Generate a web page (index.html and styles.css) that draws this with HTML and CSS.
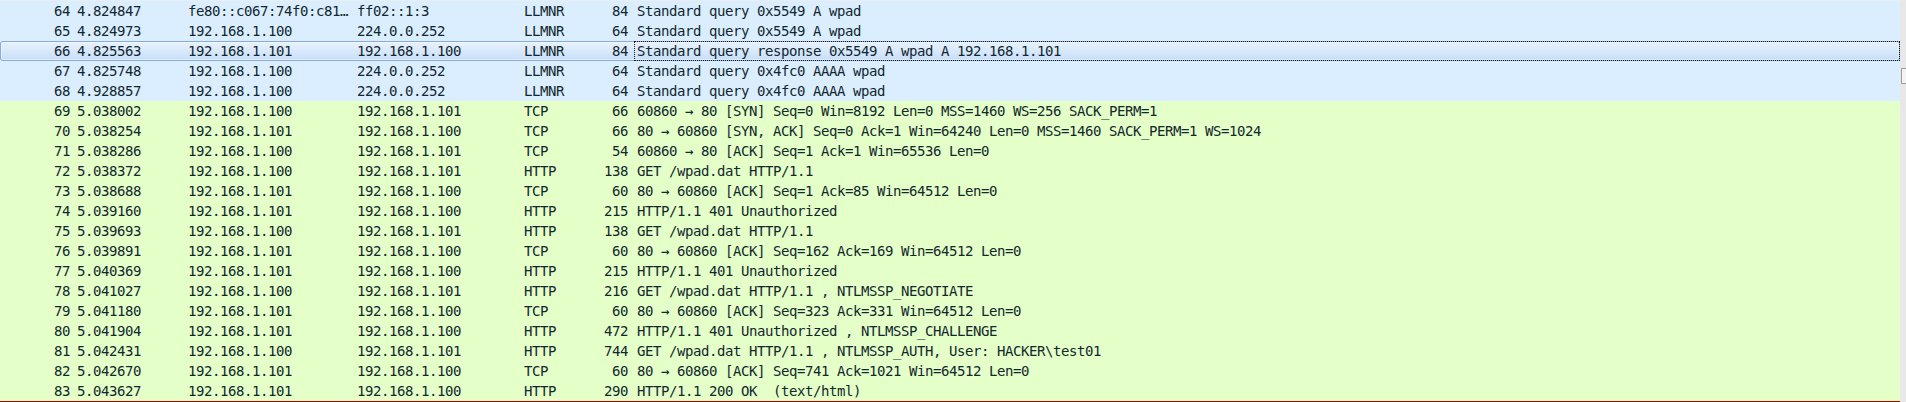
FILE: index.html
```html
<!DOCTYPE html>
<html>
<head>
<meta charset="utf-8">
<link rel="stylesheet" href="styles.css">
</head>
<body>
<div class="view">
  <div class="list">
    <div class="row udp"><span class="c no">64</span><span class="c">4.824847</span><span class="c">fe80::c067:74f0:c81…</span><span class="c">ff02::1:3</span><span class="c">LLMNR</span><span class="c len">84</span><span class="c info">Standard query 0x5549 A wpad</span></div>
    <div class="row udp"><span class="c no">65</span><span class="c">4.824973</span><span class="c">192.168.1.100</span><span class="c">224.0.0.252</span><span class="c">LLMNR</span><span class="c len">64</span><span class="c info">Standard query 0x5549 A wpad</span></div>
    <div class="row udp sel"><span class="c no">66</span><span class="c">4.825563</span><span class="c">192.168.1.101</span><span class="c">192.168.1.100</span><span class="c">LLMNR</span><span class="c len">84</span><span class="c info focus">Standard query response 0x5549 A wpad A 192.168.1.101</span></div>
    <div class="row udp"><span class="c no">67</span><span class="c">4.825748</span><span class="c">192.168.1.100</span><span class="c">224.0.0.252</span><span class="c">LLMNR</span><span class="c len">64</span><span class="c info">Standard query 0x4fc0 AAAA wpad</span></div>
    <div class="row udp"><span class="c no">68</span><span class="c">4.928857</span><span class="c">192.168.1.100</span><span class="c">224.0.0.252</span><span class="c">LLMNR</span><span class="c len">64</span><span class="c info">Standard query 0x4fc0 AAAA wpad</span></div>
    <div class="row http"><span class="c no">69</span><span class="c">5.038002</span><span class="c">192.168.1.100</span><span class="c">192.168.1.101</span><span class="c">TCP</span><span class="c len">66</span><span class="c info">60860 → 80 [SYN] Seq=0 Win=8192 Len=0 MSS=1460 WS=256 SACK_PERM=1</span></div>
    <div class="row http"><span class="c no">70</span><span class="c">5.038254</span><span class="c">192.168.1.101</span><span class="c">192.168.1.100</span><span class="c">TCP</span><span class="c len">66</span><span class="c info">80 → 60860 [SYN, ACK] Seq=0 Ack=1 Win=64240 Len=0 MSS=1460 SACK_PERM=1 WS=1024</span></div>
    <div class="row http"><span class="c no">71</span><span class="c">5.038286</span><span class="c">192.168.1.100</span><span class="c">192.168.1.101</span><span class="c">TCP</span><span class="c len">54</span><span class="c info">60860 → 80 [ACK] Seq=1 Ack=1 Win=65536 Len=0</span></div>
    <div class="row http"><span class="c no">72</span><span class="c">5.038372</span><span class="c">192.168.1.100</span><span class="c">192.168.1.101</span><span class="c">HTTP</span><span class="c len">138</span><span class="c info">GET /wpad.dat HTTP/1.1</span></div>
    <div class="row http"><span class="c no">73</span><span class="c">5.038688</span><span class="c">192.168.1.101</span><span class="c">192.168.1.100</span><span class="c">TCP</span><span class="c len">60</span><span class="c info">80 → 60860 [ACK] Seq=1 Ack=85 Win=64512 Len=0</span></div>
    <div class="row http"><span class="c no">74</span><span class="c">5.039160</span><span class="c">192.168.1.101</span><span class="c">192.168.1.100</span><span class="c">HTTP</span><span class="c len">215</span><span class="c info">HTTP/1.1 401 Unauthorized</span></div>
    <div class="row http"><span class="c no">75</span><span class="c">5.039693</span><span class="c">192.168.1.100</span><span class="c">192.168.1.101</span><span class="c">HTTP</span><span class="c len">138</span><span class="c info">GET /wpad.dat HTTP/1.1</span></div>
    <div class="row http"><span class="c no">76</span><span class="c">5.039891</span><span class="c">192.168.1.101</span><span class="c">192.168.1.100</span><span class="c">TCP</span><span class="c len">60</span><span class="c info">80 → 60860 [ACK] Seq=162 Ack=169 Win=64512 Len=0</span></div>
    <div class="row http"><span class="c no">77</span><span class="c">5.040369</span><span class="c">192.168.1.101</span><span class="c">192.168.1.100</span><span class="c">HTTP</span><span class="c len">215</span><span class="c info">HTTP/1.1 401 Unauthorized</span></div>
    <div class="row http"><span class="c no">78</span><span class="c">5.041027</span><span class="c">192.168.1.100</span><span class="c">192.168.1.101</span><span class="c">HTTP</span><span class="c len">216</span><span class="c info">GET /wpad.dat HTTP/1.1 , NTLMSSP_NEGOTIATE</span></div>
    <div class="row http"><span class="c no">79</span><span class="c">5.041180</span><span class="c">192.168.1.101</span><span class="c">192.168.1.100</span><span class="c">TCP</span><span class="c len">60</span><span class="c info">80 → 60860 [ACK] Seq=323 Ack=331 Win=64512 Len=0</span></div>
    <div class="row http"><span class="c no">80</span><span class="c">5.041904</span><span class="c">192.168.1.101</span><span class="c">192.168.1.100</span><span class="c">HTTP</span><span class="c len">472</span><span class="c info">HTTP/1.1 401 Unauthorized , NTLMSSP_CHALLENGE</span></div>
    <div class="row http"><span class="c no">81</span><span class="c">5.042431</span><span class="c">192.168.1.100</span><span class="c">192.168.1.101</span><span class="c">HTTP</span><span class="c len">744</span><span class="c info">GET /wpad.dat HTTP/1.1 , NTLMSSP_AUTH, User: HACKER\test01</span></div>
    <div class="row http"><span class="c no">82</span><span class="c">5.042670</span><span class="c">192.168.1.101</span><span class="c">192.168.1.100</span><span class="c">TCP</span><span class="c len">60</span><span class="c info">80 → 60860 [ACK] Seq=741 Ack=1021 Win=64512 Len=0</span></div>
    <div class="row http"><span class="c no">83</span><span class="c">5.043627</span><span class="c">192.168.1.101</span><span class="c">192.168.1.100</span><span class="c">HTTP</span><span class="c len">290</span><span class="c info">HTTP/1.1 200 OK  (text/html)</span></div>
    <div class="row rst"></div>
  </div>
  <div class="scrollbar"><div class="thumb"></div></div>
</div>
</body>
</html>
```

FILE: styles.css
```css
html, body {
  margin: 0;
  padding: 0;
  background: #ffffff;
  overflow: hidden;
}

.view {
  display: flex;
  width: 1906px;
  height: 402px;
  overflow: hidden;
}

.list {
  width: 1900px;
  flex: none;
  border-top: 1px solid #e9eef3;
  font-family: "DejaVu Sans Mono", "Liberation Mono", monospace;
  font-size: 14px;
  letter-spacing: -0.43px;
  color: #12272e;
}

.row {
  display: grid;
  grid-template-columns: 73px 111px 169px 167px 60px 54px 1fr;
  height: 20px;
  line-height: 20px;
  white-space: pre;
}

.udp { background: #daeeff; }
.http { background: #e4ffc7; }
.rst { background: #a40000; }

.c {
  padding-left: 4px;
  overflow: hidden;
}

.no, .len {
  text-align: right;
  padding-left: 0;
  padding-right: 3px;
}

.len { padding-right: 6px; }

.info { padding-left: 3px; }

.sel {
  background: linear-gradient(to bottom, #e9f2fd 0%, #dcebfc 40%, #c5ddf9 100%);
  box-shadow: inset 0 0 0 1px #84acdd, inset 0 0 0 2px rgba(255, 255, 255, 0.45);
  border-radius: 3px;
}

.focus {
  outline: 1px dotted #1a1a1a;
  outline-offset: -1px;
}

.scrollbar {
  flex: 1;
  background: #e8e8e8;
}

.thumb {
  margin-top: 68px;
  margin-left: 1px;
  height: 14px;
  border: 1px solid #9c9c9c;
  border-right: none;
  background: #f4f4f4;
}
```
